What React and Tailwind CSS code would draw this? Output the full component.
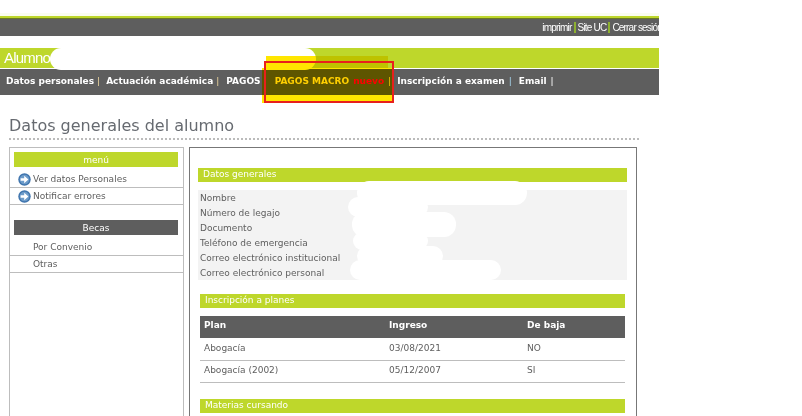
import React from 'react';

const GREEN = 'bg-[#bed72b]';

const navItems = [
  { label: 'Datos personales', sep: 'mr-[6px]' },
  { label: 'Actuación académica', sep: 'mr-[7px]' },
  { label: 'PAGOS', sep: 'mr-[7px]' },
];

const ArrowIcon = () => (
  <svg width="13" height="13" viewBox="0 0 13 13" className="shrink-0">
    <circle cx="6.5" cy="6.5" r="6.2" fill="#3f74ad" />
    <circle cx="6.5" cy="6.5" r="4.8" fill="#6d9bc9" />
    <path d="M2.6 5.2h3.6V2.8l4.2 3.7-4.2 3.7V7.8H2.6z" fill="#fff" />
  </svg>
);

const SideHeader = ({ dark, children }) => (
  <div className={`ml-1 mr-[5px] h-[15px] pt-px text-center text-white leading-[15px] ${dark ? 'bg-[#5e5e5e]' : GREEN}`}>{children}</div>
);

const SideLink = ({ icon, children }) => (
  <div className="flex h-[17px] items-center gap-[2px] border-b border-[#bdbdbd] pl-[8px] text-[#5e5e5e]">
    {icon ? <ArrowIcon /> : <span className="w-[13px]" />}
    <span className="pt-px">{children}</span>
  </div>
);

const SectionBar = ({ children, className = '' }) => (
  <div className={`h-[14px] ${GREEN} pl-[5px] text-white leading-[12px] ${className}`}>{children}</div>
);

const fields = ['Nombre', 'Número de legajo', 'Documento', 'Teléfono de emergencia', 'Correo electrónico institucional', 'Correo electrónico personal'];

const plans = [
  ['Abogacía', '03/08/2021', 'NO'],
  ['Abogacía (2002)', '05/12/2007', 'SI'],
];

// white patches hiding personal data in the capture
const blobs = [
  'left-[50px] top-[48px] w-[266px] h-[22px] rounded-[11px]',
  'left-[357px] top-[181px] w-[170px] h-[24px] rounded-[12px]',
  'left-[348px] top-[197px] w-[80px] h-[20px] rounded-[10px]',
  'left-[352px] top-[212px] w-[104px] h-[25px] rounded-[12px]',
  'left-[353px] top-[232px] w-[75px] h-[18px] rounded-[9px]',
  'left-[357px] top-[246px] w-[86px] h-[20px] rounded-[10px]',
  'left-[350px] top-[260px] w-[151px] h-[20px] rounded-[10px]',
];

export default function App() {
  return (
    <div className="relative h-[416px] w-[802px] overflow-hidden bg-white font-['DejaVu_Sans',sans-serif] text-[9px]">
      <div className="w-[659px]">
        <div className="mt-[13px] h-[3px] bg-[#fafdf0]" />
        <div className="h-[3px] bg-[#bed72b]">
          <div className="h-[2px]" />
          <div className="h-px bg-[#6b7a22]" />
        </div>
        <div className="flex h-[17px] items-center justify-end overflow-hidden whitespace-nowrap bg-[#5e5e5e] font-['Liberation_Sans',sans-serif] text-[10px] tracking-[-0.8px] text-white">
          <span>imprimir</span>
          <span className="mx-[2px] h-[11px] w-[2px] bg-[#8db030]" />
          <span>Site UC</span>
          <span className="mx-[2px] h-[11px] w-[2px] bg-[#8db030]" />
          <span className="-mr-[3px]">Cerrar sesión</span>
        </div>

        <div className={`mt-3 h-[20px] ${GREEN} pl-1 font-['Liberation_Sans',sans-serif] text-[15px] leading-[20px] tracking-[-0.8px] text-white`}>Alumno</div>
        <div className="mt-px flex h-[26px] items-center whitespace-nowrap bg-[#5e5e5e] pl-[6px] text-[9px] font-bold text-white">
          {navItems.map((item) => (
            <React.Fragment key={item.label}>
              <span>{item.label}</span>
              <span className={`ml-[3px] font-normal text-[#f0d9a0] ${item.sep}`}>|</span>
            </React.Fragment>
          ))}
          <span className="ml-px text-[#ffe600]">PAGOS MACRO</span>
          <span className="ml-[4px] text-[#ff0000]">nuevo</span>
          <span className="ml-[4px] mr-[6px] font-normal text-[#f0d9a0]">|</span>
          <span>Inscripción a examen</span>
          <span className="ml-[4px] mr-[7px] font-normal text-[#a8d8f0]">|</span>
          <span>Email</span>
          <span className="ml-[4px] font-normal">|</span>
        </div>
      </div>

      <div className="ml-[9px] mt-[20px] h-[25px] w-[630px] border-b-2 border-dotted border-[#bbbbbb] text-[16px] leading-[22px] text-[#666a70]">Datos generales del alumno</div>

      <div className="ml-[9px] mt-[7px] flex h-[300px] items-stretch gap-[5px]">
        <div className="w-[175px] border-x border-t border-[#bdbdbd] pt-[4px]">
          <SideHeader>menú</SideHeader>
          <div className="h-[4px]" />
          <SideLink icon>Ver datos Personales</SideLink>
          <SideLink icon>Notificar errores</SideLink>
          <div className="h-[15px]" />
          <SideHeader dark>Becas</SideHeader>
          <div className="h-[4px]" />
          <SideLink>Por Convenio</SideLink>
          <SideLink>Otras</SideLink>
        </div>

        <div className="w-[448px] border-x border-t border-[#777777] pl-[8px] pr-[9px] pt-[20px] text-[#5e5e5e]">
          <SectionBar className="w-[429px]">Datos generales</SectionBar>
          <div className="mt-[8px] flex h-[90px] w-[429px] flex-col justify-center bg-[#f3f3f3] pl-[2px] pt-[2px] leading-[15px]">
            {fields.map((f) => (
              <div key={f}>{f}</div>
            ))}
          </div>

          <SectionBar className="ml-[2px] mt-[14px] w-[425px]">Inscripción a planes</SectionBar>
          <table className="ml-[2px] mt-[8px] w-[425px] table-fixed border-collapse text-left">
            <thead>
              <tr className="h-[22px] bg-[#5e5e5e] text-white">
                <th className="w-[189px] pb-[2px] pl-[4px]">Plan</th>
                <th className="w-[138px] pb-[2px]">Ingreso</th>
                <th className="pb-[2px]">De baja</th>
              </tr>
            </thead>
            <tbody>
              {plans.map((row) => (
                <tr key={row[1]} className="h-[22px] border-b border-[#bdbdbd]">
                  <td className="pl-[4px]">{row[0]}</td>
                  <td>{row[1]}</td>
                  <td>{row[2]}</td>
                </tr>
              ))}
            </tbody>
          </table>
          <SectionBar className="ml-[2px] mt-[16px] w-[425px]">Materias cursando</SectionBar>
        </div>
      </div>

      {blobs.map((b) => (
        <div key={b} className={`absolute bg-white ${b}`} />
      ))}

      {/* yellow highlight and red frame drawn over the menu */}
      <div className="absolute left-[266px] top-[56px] h-[12px] w-[122px] bg-[#ffe600] mix-blend-multiply" />
      <div className="absolute left-[262px] top-[68px] h-[35px] w-[130px] bg-[#ffe600] mix-blend-multiply" />
      <div className="absolute left-[264px] top-[61px] h-[42px] w-[130px] border-2 border-[#e8201c]" />
    </div>
  );
}
